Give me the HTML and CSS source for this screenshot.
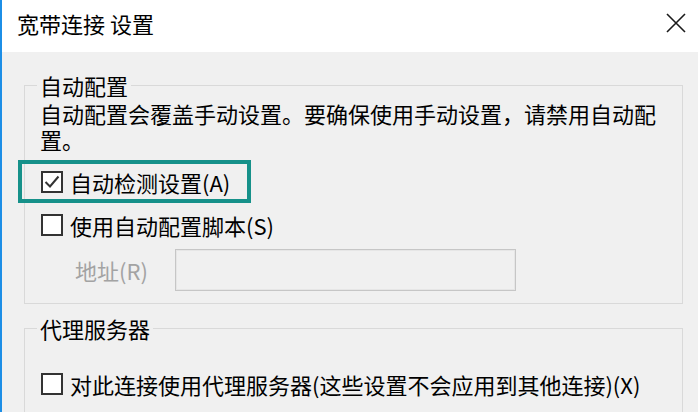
FILE: index.html
```html
<!DOCTYPE html>
<html lang="zh-CN">
<head>
<meta charset="utf-8">
<title>宽带连接 设置</title>
<link rel="stylesheet" href="styles.css">
</head>
<body>
<div class="window">
  <div class="titlebar">
    <div class="title">宽带连接 设置</div>
    <svg class="close" width="20" height="20" viewBox="0 0 20 20"><path d="M1 1 L19 19 M19 1 L1 19" stroke="#1a1a1a" stroke-width="1.6" fill="none"/></svg>
  </div>
  <div class="content">
    <fieldset class="group auto">
      <legend class="legend">自动配置</legend>
      <p class="desc">自动配置会覆盖手动设置。要确保使用手动设置，请禁用自动配置。</p>
      <div class="focus">
        <span class="check checked"><svg width="18" height="18" viewBox="0 0 18 18"><path d="M2.5 9 L7 13.5 L15.5 3.5" stroke="#333" stroke-width="2" fill="none"/></svg></span>
        <span class="label">自动检测设置(A)</span>
      </div>
      <div class="row script">
        <span class="check"></span>
        <span class="label">使用自动配置脚本(S)</span>
      </div>
      <div class="row addr">
        <span class="addr-label">地址(R)</span>
        <span class="input"></span>
      </div>
    </fieldset>
    <fieldset class="group proxy">
      <legend class="legend">代理服务器</legend>
      <div class="row proxy-row">
        <span class="check"></span>
        <span class="label">对此连接使用代理服务器(这些设置不会应用到其他连接)(X)</span>
      </div>
    </fieldset>
  </div>
</div>
</body>
</html>
```
FILE: styles.css
```css
html, body {
  margin: 0;
  padding: 0;
}
body {
  font-family: "Noto Sans CJK SC", "Microsoft YaHei", sans-serif;
  font-size: 22px;
  color: #000;
  background: #f0f0f0;
}
.window {
  width: 698px;
  height: 412px;
  overflow: hidden;
  box-sizing: border-box;
  border-left: 2px solid #1c8ee6;
  background: #f0f0f0;
}
.titlebar {
  height: 52px;
  box-sizing: border-box;
  background: #fff;
  display: flex;
  align-items: flex-start;
  justify-content: space-between;
  padding: 10px 12px 0 15px;
}
.title {
  line-height: 26px;
  font-size: 22px;
}
.close {
  margin-top: 3px;
}
.content {
  padding: 21px 15px 0 22px;
}
.group {
  margin: 0;
  border: 1px solid #d9d9d9;
  padding: 0 0 12px 15px;
  min-width: 0;
}
.legend {
  padding: 0 3px;
  margin-left: -3px;
  line-height: 24px;
}
.desc {
  margin: 3px 0 0 0;
  max-width: 625px;
  line-height: 26px;
}
.focus {
  display: inline-flex;
  align-items: center;
  box-sizing: border-box;
  height: 43px;
  margin: 8px 0 0 -22px;
  padding: 0 17px 0 19px;
  border: 4px solid #16918a;
}
.check {
  width: 22px;
  height: 22px;
  box-sizing: border-box;
  border: 2px solid #333;
  background: #fff;
  display: inline-flex;
  align-items: center;
  justify-content: center;
  flex: none;
}
.label {
  margin-left: 7px;
  line-height: 26px;
}
.row {
  display: flex;
  align-items: center;
  padding-left: 1px;
}
.script {
  height: 30px;
  margin-top: 7px;
}
.addr {
  height: 42px;
  margin-top: 9px;
  padding-left: 35px;
}
.addr-label {
  color: #a3a3a3;
  width: 100px;
  line-height: 26px;
}
.input {
  width: 341px;
  height: 42px;
  box-sizing: border-box;
  border: 1px solid #c6c6c6;
  box-shadow: inset 0 0 0 1px #e6e6e6;
  background: #f0f0f0;
}
.proxy {
  margin-top: 12px;
  padding-bottom: 40px;
}
.proxy-row {
  height: 30px;
  margin-top: 29px;
}
```
